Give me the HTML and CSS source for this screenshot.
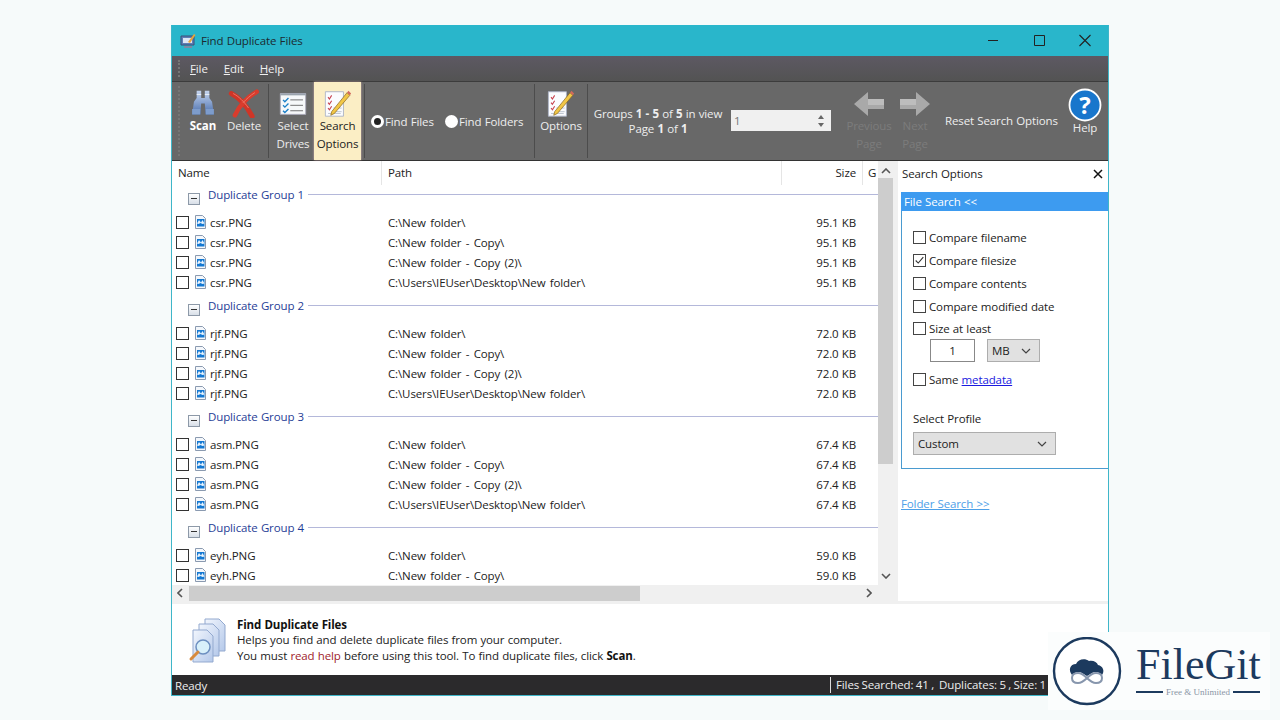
FILE: index.html
```html
<!DOCTYPE html>
<html lang="en">
<head>
<meta charset="utf-8">
<title>Find Duplicate Files</title>
<link rel="stylesheet" href="styles.css">
</head>
<body>
<svg class="defs" width="0" height="0">
  <symbol id="file" viewBox="0 0 11 14">
    <path d="M.5.5h7l3 3v10H.5z" fill="#f4f7fb" stroke="#8a9ab0"/>
    <rect x="2" y="4" width="7.500" height="7.500" fill="#1378d2"/>
    <path d="M2 8.500l2-3.500 2 2.500 1.500-2.500 2 3.500-2 .5-2-1-2 1z" fill="#e6f2fd"/>
  </symbol>
  <symbol id="note" viewBox="0 0 30 32">
    <path d="M1 3h20v27H1z" fill="#fbfcff" stroke="#aab2c4"/>
    <path d="M4 9l1.500 2L8 7M4 15l1.500 2L8 13M4 21l1.500 2L8 19" fill="none" stroke="#c8434f" stroke-width="1.200"/>
    <path d="M10 21h9M10 25h9M4 27h14" stroke="#b8c0cc"/>
    <path d="M8 25l-1 4 4-2L28 7l-3-3z" fill="#f2c746" stroke="#8c6a1e" stroke-width=".8"/>
    <path d="M25 4l3 3 1.500-2-3-3z" fill="#d26a5c"/>
  </symbol>
</svg>
<main class="window">
  <header class="titlebar">
    <svg class="app-icon" viewBox="0 0 16 16" width="16" height="16">
      <path d="M1 3h13v9H1z" fill="#5f7fb6" stroke="#3b4f78"/>
      <path d="M3 5h9v5H3z" fill="#dce6f5"/>
      <path d="M4 14h8" stroke="#7d8aa4" stroke-width="2"/>
      <path d="M8 9l6-8 1.500 1L10 10z" fill="#e9a53b"/>
    </svg>
    <span class="title-text">Find Duplicate Files</span>
    <div class="win-controls">
      <svg viewBox="0 0 46 30" width="46" height="30"><path d="M18 15.500h10" stroke="#222"/></svg>
      <svg viewBox="0 0 46 30" width="46" height="30"><path d="M18.500 10.500h10v10h-10z" fill="none" stroke="#222"/></svg>
      <svg viewBox="0 0 46 30" width="46" height="30"><path d="M17.500 10l11 11M28.500 10l-11 11" stroke="#222" stroke-width="1.100"/></svg>
    </div>
  </header>
  <nav class="menubar">
    <span class="menu-item"><u>F</u>ile</span>
    <span class="menu-item"><u>E</u>dit</span>
    <span class="menu-item"><u>H</u>elp</span>
  </nav>
  <div class="toolbar">
    <div class="tool tool-scan">
      <svg class="tool-icon" viewBox="0 0 32 32" width="32" height="29">
        <defs><linearGradient id="bn" x1="0" x2="0" y1="0" y2="1"><stop offset="0" stop-color="#c4d4ee"/><stop offset="1" stop-color="#4a6fae"/></linearGradient></defs>
        <path d="M9 2h5v8h4V2h5v8l3 4 2 14H19l-1-12h-4l-1 12H4l2-14 3-4z" fill="url(#bn)"/>
        <path d="M4 22h9v6H4zM19 22h9v6h-9z" fill="#7d9ccc"/>
        <path d="M9 6h5M18 6h5" stroke="#f0f4fb"/>
      </svg>
      <b>Scan</b>
    </div>
    <div class="tool tool-delete">
      <svg class="tool-icon" viewBox="0 0 34 32" width="34" height="29">
        <path d="M3 5c8 4 17 14 23 25" fill="none" stroke="#cf3527" stroke-width="5.500" stroke-linecap="round"/>
        <path d="M31 3C21 9 12 18 7 29" fill="none" stroke="#d93c2d" stroke-width="5" stroke-linecap="round"/>
        <path d="M5 5c6 3 12 9 17 16M29 4c-5 3-9 7-13 11" fill="none" stroke="#ee7a6a" stroke-width="1"/>
      </svg>
      <span>Delete</span>
    </div>
    <i class="tool-sep"></i>
    <div class="tool tool-drives">
      <svg class="tool-icon" viewBox="0 0 32 32" width="32" height="29">
        <path d="M2 5h28v23H2z" fill="#f6f8fa" stroke="#aab"/>
        <path d="M2 5h28v2H2z" fill="#9aa3ad"/>
        <path d="M5 12l2 2 4-4M5 18l2 2 4-4M5 24l2 2 4-4" fill="none" stroke="#1b7fc8" stroke-width="1.500"/>
        <path d="M13 12h14M13 18h14M13 24h14" stroke="#666"/>
      </svg>
      <span>Select<br>Drives</span>
    </div>
    <div class="tool tool-search">
      <svg class="tool-icon" viewBox="0 0 30 32" width="30" height="29"><use href="#note"/></svg>
      <span>Search<br>Options</span>
    </div>
    <i class="tool-sep"></i>
    <label class="radio-item radio-files"><i class="radio on"></i>Find Files</label>
    <label class="radio-item radio-folders"><i class="radio"></i>Find Folders</label>
    <i class="tool-sep"></i>
    <div class="tool tool-options">
      <svg class="tool-icon" viewBox="0 0 30 32" width="30" height="29"><use href="#note"/></svg>
      <span>Options</span>
    </div>
    <i class="tool-sep"></i>
    <div class="groups-info">Groups <b>1 - 5</b> of <b>5</b> in view<br>Page <b>1</b> of <b>1</b></div>
    <div class="spinner">
      <span>1</span>
      <svg viewBox="0 0 8 16" width="8" height="16"><path d="M1 6l3-4 3 4zM1 10l3 4 3-4z" fill="#666"/></svg>
    </div>
    <div class="tool tool-prev dim">
      <svg class="tool-icon" viewBox="0 0 32 26" width="32" height="26"><path d="M1 13L15 1v7h16v10H15v7z" fill="#a9a9a9"/><path d="M15 8h16v6H15z" fill="#bdbdbd"/></svg>
      <span>Previous<br>Page</span>
    </div>
    <div class="tool tool-next dim">
      <svg class="tool-icon" viewBox="0 0 32 26" width="32" height="26"><path d="M31 13L17 1v7H1v10h16v7z" fill="#a9a9a9"/><path d="M1 8h16v6H1z" fill="#bdbdbd"/></svg>
      <span>Next<br>Page</span>
    </div>
    <div class="reset-link">Reset Search Options</div>
    <div class="tool tool-help">
      <svg class="help-icon" viewBox="0 0 34 34" width="34" height="34">
        <circle cx="17" cy="17" r="15.500" fill="#1876cc" stroke="#fff" stroke-width="1.800"/>
        <text x="17" y="26" text-anchor="middle" class="help-q">?</text>
      </svg>
      <span>Help</span>
    </div>
  </div>
  <div class="workarea">
    <section class="listpane">
      <div class="list-top">
        <div class="list-view">
          <div class="cols">
            <span class="col col-name">Name</span>
            <span class="col col-path">Path</span>
            <span class="col col-size">Size</span>
            <span class="col col-g">G</span>
          </div>
          <div class="rows">
            <div class="group-head"><i class="minus"></i><span>Duplicate Group 1</span><i class="rule"></i></div>
            <div class="row"><i class="check"></i><svg class="ficon"><use href="#file"/></svg><span class="r-name">csr.PNG</span><span class="r-path">C:\New folder\</span><span class="r-size">95.1 KB</span></div>
            <div class="row"><i class="check"></i><svg class="ficon"><use href="#file"/></svg><span class="r-name">csr.PNG</span><span class="r-path">C:\New folder - Copy\</span><span class="r-size">95.1 KB</span></div>
            <div class="row"><i class="check"></i><svg class="ficon"><use href="#file"/></svg><span class="r-name">csr.PNG</span><span class="r-path">C:\New folder - Copy (2)\</span><span class="r-size">95.1 KB</span></div>
            <div class="row"><i class="check"></i><svg class="ficon"><use href="#file"/></svg><span class="r-name">csr.PNG</span><span class="r-path">C:\Users\IEUser\Desktop\New folder\</span><span class="r-size">95.1 KB</span></div>
            <div class="group-head"><i class="minus"></i><span>Duplicate Group 2</span><i class="rule"></i></div>
            <div class="row"><i class="check"></i><svg class="ficon"><use href="#file"/></svg><span class="r-name">rjf.PNG</span><span class="r-path">C:\New folder\</span><span class="r-size">72.0 KB</span></div>
            <div class="row"><i class="check"></i><svg class="ficon"><use href="#file"/></svg><span class="r-name">rjf.PNG</span><span class="r-path">C:\New folder - Copy\</span><span class="r-size">72.0 KB</span></div>
            <div class="row"><i class="check"></i><svg class="ficon"><use href="#file"/></svg><span class="r-name">rjf.PNG</span><span class="r-path">C:\New folder - Copy (2)\</span><span class="r-size">72.0 KB</span></div>
            <div class="row"><i class="check"></i><svg class="ficon"><use href="#file"/></svg><span class="r-name">rjf.PNG</span><span class="r-path">C:\Users\IEUser\Desktop\New folder\</span><span class="r-size">72.0 KB</span></div>
            <div class="group-head"><i class="minus"></i><span>Duplicate Group 3</span><i class="rule"></i></div>
            <div class="row"><i class="check"></i><svg class="ficon"><use href="#file"/></svg><span class="r-name">asm.PNG</span><span class="r-path">C:\New folder\</span><span class="r-size">67.4 KB</span></div>
            <div class="row"><i class="check"></i><svg class="ficon"><use href="#file"/></svg><span class="r-name">asm.PNG</span><span class="r-path">C:\New folder - Copy\</span><span class="r-size">67.4 KB</span></div>
            <div class="row"><i class="check"></i><svg class="ficon"><use href="#file"/></svg><span class="r-name">asm.PNG</span><span class="r-path">C:\New folder - Copy (2)\</span><span class="r-size">67.4 KB</span></div>
            <div class="row"><i class="check"></i><svg class="ficon"><use href="#file"/></svg><span class="r-name">asm.PNG</span><span class="r-path">C:\Users\IEUser\Desktop\New folder\</span><span class="r-size">67.4 KB</span></div>
            <div class="group-head"><i class="minus"></i><span>Duplicate Group 4</span><i class="rule"></i></div>
            <div class="row"><i class="check"></i><svg class="ficon"><use href="#file"/></svg><span class="r-name">eyh.PNG</span><span class="r-path">C:\New folder\</span><span class="r-size">59.0 KB</span></div>
            <div class="row"><i class="check"></i><svg class="ficon"><use href="#file"/></svg><span class="r-name">eyh.PNG</span><span class="r-path">C:\New folder - Copy\</span><span class="r-size">59.0 KB</span></div>
          </div>
        </div>
        <div class="vscroll">
          <svg viewBox="0 0 10 6" width="10" height="6"><path d="M1 5l4-4 4 4" fill="none" stroke="#555" stroke-width="1.600"/></svg>
          <div class="vtrack"><div class="vthumb"></div></div>
          <svg viewBox="0 0 10 6" width="10" height="6"><path d="M1 1l4 4 4-4" fill="none" stroke="#555" stroke-width="1.600"/></svg>
        </div>
      </div>
      <div class="hscroll">
        <svg viewBox="0 0 6 10" width="6" height="10"><path d="M5 1L1 5l4 4" fill="none" stroke="#555" stroke-width="1.600"/></svg>
        <div class="htrack"><div class="hthumb"></div></div>
        <svg viewBox="0 0 6 10" width="6" height="10"><path d="M1 1l4 4-4 4" fill="none" stroke="#555" stroke-width="1.600"/></svg>
      </div>
    </section>
    <aside class="optpane">
      <div class="opt-title"><span>Search Options</span><svg viewBox="0 0 10 10" width="10" height="10"><path d="M1 1l8 8M9 1L1 9" stroke="#111" stroke-width="1.500"/></svg></div>
      <div class="opt-head">File Search &lt;&lt;</div>
      <div class="opt-box">
        <div class="opt-check"><i class="check"></i>Compare filename</div>
        <div class="opt-check"><i class="check checked"><svg viewBox="0 0 13 13" width="11" height="11"><path d="M2 6.500l3 3 6-7" fill="none" stroke="#333" stroke-width="1.300"/></svg></i>Compare filesize</div>
        <div class="opt-check"><i class="check"></i>Compare contents</div>
        <div class="opt-check"><i class="check"></i>Compare modified date</div>
        <div class="opt-check opt-size"><i class="check"></i>Size at least</div>
        <div class="size-row">
          <div class="num-input">1</div>
          <div class="combo combo-mb"><span>MB</span><svg viewBox="0 0 10 6" width="10" height="6"><path d="M1 1l4 4 4-4" fill="none" stroke="#444" stroke-width="1.200"/></svg></div>
        </div>
        <div class="opt-check opt-meta"><i class="check"></i>Same&nbsp;<a href="#">metadata</a></div>
        <div class="profile-label">Select Profile</div>
        <div class="combo combo-profile"><span>Custom</span><svg viewBox="0 0 10 6" width="10" height="6"><path d="M1 1l4 4 4-4" fill="none" stroke="#444" stroke-width="1.200"/></svg></div>
      </div>
      <a class="folder-link" href="#">Folder Search &gt;&gt;</a>
    </aside>
  </div>
  <div class="infobar">
    <svg class="info-icon" viewBox="0 0 42 46" width="42" height="46">
      <defs><linearGradient id="pg" x1="0" x2="1" y1="0" y2="1"><stop offset="0" stop-color="#f2f6fd"/><stop offset="1" stop-color="#b5c9ea"/></linearGradient></defs>
      <path d="M17 1h14l6 6v26H17z" fill="url(#pg)" stroke="#93a9cf"/>
      <path d="M11 6h14l6 6v26H11z" fill="url(#pg)" stroke="#93a9cf"/>
      <path d="M5 12h14l6 6v26H5z" fill="url(#pg)" stroke="#93a9cf"/>
      <circle cx="15" cy="29" r="7" fill="#d8f0fa" stroke="#6d8fc0" stroke-width="1.500"/>
      <path d="M10 34l-7 7" stroke="#d78a3e" stroke-width="3" stroke-linecap="round"/>
    </svg>
    <div class="info-text">
      <b>Find Duplicate Files</b><br>
      Helps you find and delete duplicate files from your computer.<br>
      You must <span class="readhelp">read help</span> before using this tool. To find duplicate files, click <b>Scan</b>.
    </div>
  </div>
  <footer class="statusbar">
    <span class="st-ready">Ready</span>
    <span class="st-info">Files Searched: 41 ,&nbsp; Duplicates: 5 , Size: 1</span>
  </footer>
</main>
<div class="logo">
  <svg class="logo-mark" viewBox="0 0 70 70" width="70" height="70">
    <circle cx="35" cy="34" r="33" fill="#fff" stroke="#1c3a5e" stroke-width="2.400"/>
    <path d="M20 38c-4-5-2-11 4-11 2-5 9-6 13-3 4-1 8 1 9 4 5 1 7 6 4 10-3-3-7-4-10-2l-5 3-5-3c-3-2-7-1-10 2z" fill="#1c3a5e"/>
    <path d="M35 41c-3-3-6-5-9-5-4 0-6 2-6 5s2 5 6 5c3 0 6-2 9-5zm0 0c3-3 6-5 9-5 4 0 6 2 6 5s-2 5-6 5c-3 0-6-2-9-5z" fill="none" stroke="#8796ad" stroke-width="2"/>
  </svg>
  <div class="logo-text">
    <div class="logo-name">FileGit</div>
    <div class="logo-sub"><i></i><span>Free &amp; Unlimited</span><i></i></div>
  </div>
</div>
</body>
</html>
```
FILE: styles.css
```css
* { box-sizing: border-box; }
html, body { margin: 0; height: 720px; overflow: hidden; }
body {
  background: #f6fafa;
  padding: 25px 171px 0;
  font-family: "Open Sans", "Noto Sans", sans-serif;
  font-size: 11.5px;
  letter-spacing: -.12px;
  word-spacing: .4px;
  color: #222;
  position: relative;
}
.defs { position: absolute; }
i { display: block; font-style: normal; }
svg { display: block; flex: none; }

.window {
  width: 938px;
  height: 671px;
  border: 1px solid #3fb6c9;
  border-top-color: #29b6cb;
  display: flex;
  flex-direction: column;
  background: #fff;
}

.titlebar {
  height: 30px;
  background: #29b6cb;
  display: flex;
  align-items: center;
  padding-left: 8px;
  flex: none;
}
.app-icon { margin-right: 5px; }
.title-text { color: #1c2a30; margin-top: -1px; }
.win-controls { margin-left: auto; display: flex; margin-top: -2px; }

.menubar {
  height: 26px;
  background: linear-gradient(#5d5963, #535353);
  display: flex;
  align-items: center;
  padding-left: 18px;
  gap: 16px;
  color: #f0f0f0;
  flex: none;
  border-bottom: 1px solid #3c3c3c;
  position: relative;
}
.menubar::before, .toolbar::before {
  content: "";
  position: absolute;
  left: 6px;
  top: 4px;
  bottom: 4px;
  border-left: 2px dotted #767676;
}

.toolbar {
  height: 79px;
  background: #686868;
  border-bottom: 1px solid #333;
  display: flex;
  color: #eeeeee;
  flex: none;
  padding-left: 11px;
  position: relative;
}
.tool {
  display: flex;
  flex-direction: column;
  align-items: center;
  text-align: center;
  padding-top: 7px;
  line-height: 18px;
}
.tool-icon { margin-bottom: -1px; }
.tool b { color: #fff; }
.tool-scan { width: 40px; }
.tool-delete { width: 42px; }
.tool-sep { width: 1px; background: #4c4c4c; margin: 2px 3px; }
.tool-drives { width: 42px; }
.tool-search { width: 47px; background: #fbeec5; color: #222; box-shadow: 0 0 2px #caa; }
.radio-item { display: flex; align-items: center; height: 18px; margin-top: 30px; }
.radio-files { margin-left: 3px; width: 74px; }
.radio-folders { width: 86px; }
.radio { width: 13px; height: 13px; border-radius: 50%; background: #fff; margin-right: 1px; }
.radio.on { border: 3px solid #fff; background: #222; }
.tool-options { width: 46px; }
.groups-info { width: 134px; text-align: center; padding-top: 24px; line-height: 15px; }
.spinner {
  margin: 28px 0 0 6px;
  width: 100px;
  height: 21px;
  background: #f0f0f0;
  color: #777;
  display: flex;
  align-items: center;
  justify-content: space-between;
  padding: 0 6px 0 3px;
  flex: none;
}
.tool-prev { width: 60px; margin-left: 8px; }
.tool-next { width: 32px; }
.tool-prev .tool-icon, .tool-next .tool-icon { margin: 2px 0 0; }
.dim span { color: #7c7c7c; }
.reset-link { margin-left: 14px; padding-top: 31px; width: 123px; white-space: nowrap; }
.tool-help { width: 34px; padding-top: 6px; line-height: 14px; }
.help-icon { margin-bottom: -1px; }
.help-q { font: bold 24px "Open Sans", sans-serif; fill: #fff; }

.workarea { flex: 1; min-height: 0; display: flex; background: #f0f0f0; }
.listpane { width: 722px; display: flex; flex-direction: column; flex: none; }
.list-top { height: 424px; display: flex; flex: none; }
.list-view { width: 706px; background: #fff; overflow: hidden; flex: none; }
.cols { height: 24px; display: flex; align-items: center; }
.col { height: 100%; display: flex; align-items: center; border-right: 1px solid #e5e5e5; padding: 0 0 2px 6px; flex: none; }
.col-name { width: 210px; }
.col-path { width: 400px; }
.col-size { width: 81px; justify-content: flex-end; padding-right: 6px; }
.col-g { border: 0; width: 15px; overflow: hidden; padding-left: 5px; }
.rows { height: 400px; overflow: hidden; }
.group-head { height: 27px; display: flex; align-items: flex-start; padding-left: 16px; }
.row + .group-head { margin-top: 4px; }
.group-head span { color: #1f3d96; margin: 0 4px 0 8px; line-height: 20px; }
.minus { width: 12px; height: 12px; border: 1px solid #8d99a8; background: linear-gradient(#fff, #d8dfe8); margin-top: 8px; position: relative; }
.minus::after { content: ""; position: absolute; left: 2px; right: 2px; top: 4px; height: 1px; background: #333; }
.rule { flex: 1; height: 1px; background: #b4b8da; margin-top: 9px; }
.row { height: 20px; display: flex; align-items: center; padding-left: 4px; }
.check { width: 13px; height: 13px; border: 1px solid #333; background: #fff; flex: none; }
.ficon { width: 11px; height: 14px; margin-left: 6px; }
.r-name { width: 178px; margin-left: 4px; }
.r-path { width: 400px; word-spacing: 1.500px; }
.r-size { width: 68px; text-align: right; }

.vscroll { width: 16px; background: #f0f0f0; display: flex; flex-direction: column; align-items: center; flex: none; padding: 7px 0 6px; }
.vtrack { flex: 1; width: 100%; padding-top: 4px; }
.vthumb { height: 286px; background: #cdcdcd; width: 15px; }
.hscroll { height: 16px; background: #f0f0f0; display: flex; align-items: center; padding: 0 22px 0 5px; }
.htrack { flex: 1; padding-left: 6px; }
.hthumb { width: 451px; height: 15px; background: #cdcdcd; }

.optpane { width: 210px; margin-left: 4px; background: #fff; flex: none; height: 440px; margin-bottom: 4px; }
.opt-title { height: 31px; display: flex; align-items: center; justify-content: space-between; padding: 0 5px 6px 4px; }
.opt-head { margin-left: 3px; height: 19px; background: #3d9bf0; color: #fff; padding-left: 3px; line-height: 19px; }
.opt-box { margin-left: 3px; height: 258px; border-left: 1px solid #4a9bd0; border-bottom: 1px solid #4a9bd0; padding: 15px 0 0 11px; }
.opt-check { display: flex; align-items: center; height: 23px; white-space: pre; }
.opt-check .check { margin-right: 3px; border-color: #444; }
.opt-size { height: 22px; padding-bottom: 2px; }
.size-row { display: flex; gap: 12px; padding-left: 17px; margin: -1px 0 6px; }
.num-input { width: 45px; height: 23px; border: 1px solid #888; text-align: center; line-height: 21px; }
.combo { display: flex; align-items: center; justify-content: space-between; background: #e1e1e1; border: 1px solid #adadad; height: 23px; padding: 0 8px 0 4px; }
.combo-mb { width: 53px; }
.combo-profile { width: 143px; margin-top: 3px; }
.opt-meta a { color: #1a1ae0; }
.profile-label { margin-top: 18px; height: 20px; line-height: 20px; }
.folder-link { display: block; margin: 27px 0 0 3px; color: #4da0e8; }

.infobar { height: 71px; background: #fff; display: flex; flex: none; padding: 10px 0 0 16px; }
.info-icon { margin: 4px 7px 0 0; }
.info-text { line-height: 15.5px; padding-top: 2.500px; }
.info-text b { color: #111; }
.readhelp { color: #a01c2c; }

.statusbar { height: 20px; background: #2b2a2c; color: #eee; display: flex; align-items: center; flex: none; padding-left: 3px; }
.st-ready { width: 655px; flex: none; }
.st-info { border-left: 1px solid #ddd; padding-left: 5px; white-space: nowrap; height: 16px; line-height: 16px; word-spacing: -.4px; }

.logo {
  position: absolute;
  left: 1048px;
  top: 632px;
  width: 222px;
  height: 78px;
  background: #fbfdfd;
  display: flex;
  padding: 5px 0 0 4px;
  color: #1c3a5e;
}
.logo-text { margin-left: 14px; width: 124px; letter-spacing: 0; word-spacing: 0; }
.logo-name { font: 44px/44px "Liberation Serif", serif; margin-top: 6px; }
.logo-sub { display: flex; align-items: center; gap: 3px; font: 9px/10px "Liberation Serif", serif; color: #8a95a5; white-space: nowrap; }
.logo-sub i { flex: 1; height: 2.500px; background: #1c3a5e; }
```
